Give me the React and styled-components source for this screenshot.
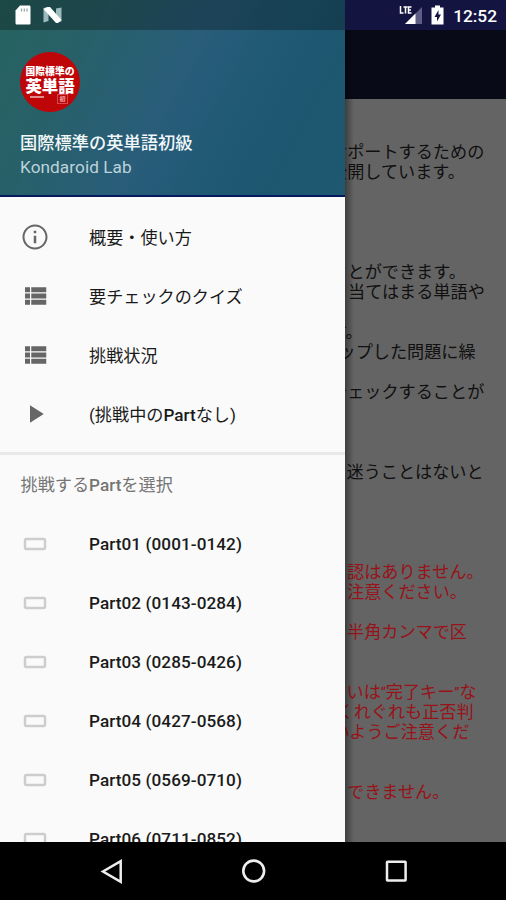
import React from 'react';
import styled, { createGlobalStyle } from 'styled-components';

const GlobalStyle = createGlobalStyle`
    *{
        box-sizing:border-box;
    }

    body{
        margin:0;
        background-color:#000;
        font-family:Roboto, "Noto Sans CJK JP", sans-serif;
        overflow:hidden;
    }

    svg{
        display:block;
        flex-shrink:0;
    }
`;

const Phone = styled.div`
    position:relative;
    width:506px;
    height:900px;
    display:flex;
    flex-direction:column;
    overflow:hidden;
    background-color:#000;
`;

const StatusBar = styled.div`
    height:30px;
    flex-shrink:0;
    background-color:#141440;
    display:flex;
    justify-content:flex-end;
    align-items:center;
    gap:8px;
    padding-right:9px;
`;

const Clock = styled.span`
    font-size:17.3px;
    font-weight:500;
    line-height:30px;
    color:#FFF;
    padding-top:2px;
`;

const AppBar = styled.div`
    height:69px;
    flex-shrink:0;
    background-color:#080A18;
`;

const Content = styled.div`
    flex:1;
    min-height:0;
    padding-top:42px;
    background-color:#646464;
    overflow:hidden;
`;

const Line = styled.p`
    margin:0;
    height:20px;
    line-height:20px;
    padding-left:${props=>props.$left || 330}px;
    font-size:17.15px;
    font-family:"Noto Sans CJK JP", sans-serif;
    white-space:nowrap;
    color:${props=>props.$warn ? "#981218" : "#101010"};
`;

const Quote = styled.span`
    font-family:Roboto, sans-serif;
    font-size:14px;
`;

const Drawer = styled.aside`
    position:absolute;
    top:0;
    left:0;
    width:345px;
    height:842px;
    overflow:hidden;
    background-color:#FAFAFA;
`;

const Shade = styled.div`
    position:absolute;
    top:30px;
    left:345px;
    width:9px;
    height:812px;
    background:linear-gradient(90deg, rgba(0,0,0,0.38), rgba(0,0,0,0));
`;

const DrawerHeader = styled.header`
    height:197px;
    border-bottom:2px solid #06195C;
    background:linear-gradient(118deg, #27635F 0%, #286069 24%, #295D7A 49%, #225A76 62%, #1C566F 82%, #1F5871 100%);

    .status{
        height:30px;
        padding:5px 0 0 14px;
        display:flex;
        gap:10px;
        background-color:rgba(0,0,0,0.27);
    }

    .account{
        padding:22px 20px 0;
    }

    .title{
        margin-top:20px;
        font-size:17.25px;
        line-height:22px;
        font-weight:500;
        color:#F2F8FA;
        white-space:nowrap;
    }

    .sub{
        margin-top:1px;
        font-size:17.2px;
        line-height:24px;
        letter-spacing:0.08px;
        color:#BCD3DA;
    }
`;

const Logo = styled.div`
    width:60px;
    height:60px;
    border-radius:50%;
    background-color:#BE0508;
    color:#FFF;
    display:flex;
    flex-direction:column;
    align-items:center;
    padding-top:13px;
    font-family:"Noto Sans CJK JP", sans-serif;
    font-weight:900;

    .small{
        font-size:9.8px;
        line-height:12px;
        white-space:nowrap;
    }

    .big{
        font-size:16.4px;
        line-height:16px;
        white-space:nowrap;
    }

    .foot{
        width:44px;
        margin-top:1px;
        display:flex;
        justify-content:space-between;
        align-items:flex-start;
        padding:0 4px 0 2px;
    }

    .foot i{
        width:14px;
        height:2px;
        margin-top:2px;
        background-color:#E58A8B;
    }

    .foot b{
        width:11px;
        height:10px;
        border:1px solid #D64A4C;
        font-size:6px;
        line-height:7px;
        text-align:center;
        color:#EFA0A1;
    }
`;

const Menu = styled.nav`
    padding:${props=>props.$top || 0}px 0 9px;
`;

const Item = styled.div`
    height:59.1px;
    display:flex;
    align-items:center;
    padding-left:20px;
    font-size:17.15px;
    font-weight:${props=>props.$medium ? 500 : 400};
    letter-spacing:${props=>props.$medium ? 0.07 : 0}px;
    color:#1A1A1A;
    white-space:nowrap;

    svg{
        margin-right:39px;
    }

    b{
        font-weight:500;
    }
`;

const Divider = styled.div`
    height:3px;
    background-color:#E9E9E9;
`;

const SubHeader = styled.div`
    height:59px;
    line-height:61px;
    padding-left:20.5px;
    font-size:17.15px;
    color:#757575;

    b{
        font-weight:500;
    }
`;

const NavBar = styled.div`
    height:58px;
    flex-shrink:0;
    background-color:#000;
    display:flex;
    justify-content:center;
    align-items:center;
    gap:114px;
`;

const icons = {
    info: "M11 17h2v-6h-2v6zm1-15C6.48 2 2 6.48 2 12s4.48 10 10 10 10-4.48 10-10S17.52 2 12 2zm0 18.4c-4.63 0-8.4-3.77-8.4-8.4s3.77-8.4 8.4-8.4 8.4 3.77 8.4 8.4-3.77 8.4-8.4 8.4zM11 9h2V7h-2v2z",
    list: "M4 14h4v-4H4v4zm0 5h4v-4H4v4zM4 9h4V5H4v4zm5 5h12v-4H9v4zm0 5h12v-4H9v4zM9 5v4h12V5H9z",
    play: "M8 5v14l11-7z",
    card: "M19 7H5c-1.1 0-2 .9-2 2v6c0 1.1.9 2 2 2h14c1.1 0 2-.9 2-2V9c0-1.1-.9-2-2-2zm0 8H5V9h14v6z"
};

const Icon = ({ name, color }) => (
    <svg width="30" height="30" viewBox="0 0 24 24" fill={color || "#666"}>
        <path d={icons[name]}/>
    </svg>
);

const lines = [
    { text: "サポートするための" },
    { text: "公開しています。" },
    {}, {}, {}, {},
    { text: "とができます。", left: 347.5 },
    { text: "当てはまる単語や", left: 348 },
    {},
    { text: "す。" },
    { text: "ップした問題に繰", left: 338.5 },
    {},
    { text: "チェックすることが" },
    {}, {}, {},
    { text: "迷うことはないと", left: 346.5 },
    {}, {}, {}, {},
    { text: "認はありません。", left: 347, warn: true },
    { text: "注意ください。", left: 347, warn: true },
    {},
    { text: "半角カンマで区", left: 347, warn: true },
    {}, {},
    { text: <>いは<Quote>“</Quote>完了キー<Quote>”</Quote>な</>, left: 346.5, warn: true },
    { text: "くれぐれも正否判", left: 336.5, warn: true },
    { text: "いようご注意くだ", left: 332.5, warn: true },
    {}, {},
    { text: "できません。", left: 347, warn: true }
];

const parts = [
    "Part01 (0001-0142)",
    "Part02 (0143-0284)",
    "Part03 (0285-0426)",
    "Part04 (0427-0568)",
    "Part05 (0569-0710)",
    "Part06 (0711-0852)"
];

const App = () => {
    return(
        <Phone>
            <GlobalStyle/>
            <StatusBar>
                <svg width="24" height="22" viewBox="0 0 24 22">
                    <path d="M23 3v17h-17z" fill="#5D5D83"/>
                    <path d="M16.5 9.5v10.500h-10.500z" fill="#FFF"/>
                    <path d="M1.500 2v7h3M4.500 3h4M6.500 3v6.500M12.500 3h-3v6h3M9.500 6h2.500" fill="none" stroke="#FFF" strokeWidth="1.500"/>
                </svg>
                <svg width="14" height="22" viewBox="0 0 14 22">
                    <path d="M4 1.500h5v2h3.500v17h-12v-17h3.500z" fill="#FFF"/>
                    <path d="M7.500 6l-4 7h2.500v4.500l4-7h-2.500z" fill="#141440"/>
                </svg>
                <Clock>12:52</Clock>
            </StatusBar>
            <AppBar/>
            <Content>
                {lines.map((i,k)=>
                    <Line key={k} $left={i.left} $warn={i.warn}>{i.text}</Line>
                )}
            </Content>
            <NavBar>
                <svg width="28" height="28" viewBox="0 0 28 28" fill="none" stroke="#EEE" strokeWidth="2.500">
                    <path d="M23.700 4.200v20.600l-17.700-10.300z"/>
                </svg>
                <svg width="28" height="28" viewBox="0 0 28 28" fill="none" stroke="#EEE" strokeWidth="2.600">
                    <circle cx="14.700" cy="14" r="10.400"/>
                </svg>
                <svg width="28" height="28" viewBox="0 0 28 28" fill="none" stroke="#EEE" strokeWidth="2.500">
                    <rect x="6" y="4.800" width="18.600" height="18.600" rx="0.500"/>
                </svg>
            </NavBar>
            <Shade/>
            <Drawer>
                <DrawerHeader>
                    <div className="status">
                        <svg width="18" height="20" viewBox="0 0 18 20">
                            <path d="M6 0.500h9c1 0 1.500.500 1.500 1.500v16c0 1-.500 1.500-1.500 1.500h-12c-1 0-1.500-.500-1.500-1.500v-12.500z" fill="#FFF"/>
                            <path d="M7.500 3.500v3M10.300 3.500v3M13 3.500v3" stroke="#8DA3A5" strokeWidth="1.200"/>
                        </svg>
                        <svg width="22" height="20" viewBox="0 0 22 20">
                            <path d="M1.500 3l5-1v14l-5 1.500zM14 3.500l5.500-1v14l-5.500 1z" fill="#9DBBBC"/>
                            <path d="M1.500 4l4-2h2.500l11.500 13-3.500 3h-2z" fill="#FFF"/>
                        </svg>
                    </div>
                    <div className="account">
                        <Logo>
                            <span className="small">国際標準の</span>
                            <span className="big">英単語</span>
                            <div className="foot"><i/><b>初</b></div>
                        </Logo>
                        <div className="title">国際標準の英単語初級</div>
                        <div className="sub">Kondaroid Lab</div>
                    </div>
                </DrawerHeader>
                <Menu $top={10}>
                    <Item><Icon name="info"/>概要・使い方</Item>
                    <Item><Icon name="list"/>要チェックのクイズ</Item>
                    <Item><Icon name="list"/>挑戦状況</Item>
                    <Item><Icon name="play"/><span>(挑戦中の<b>Part</b>なし)</span></Item>
                </Menu>
                <Divider/>
                <SubHeader>挑戦する<b>Part</b>を選択</SubHeader>
                {parts.map((i,k)=>
                    <Item key={k} $medium><Icon name="card" color="#CDCDCD"/>{i}</Item>
                )}
            </Drawer>
        </Phone>
    )
}

export default App;
